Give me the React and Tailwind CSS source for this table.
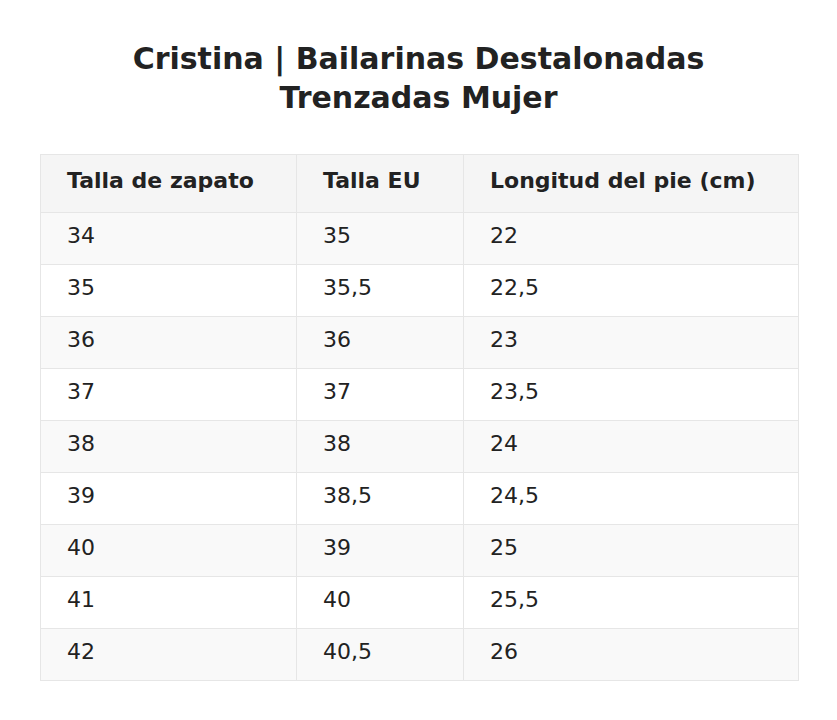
export default function App() {
  const rows = [
    ["34", "35", "22"],
    ["35", "35,5", "22,5"],
    ["36", "36", "23"],
    ["37", "37", "23,5"],
    ["38", "38", "24"],
    ["39", "38,5", "24,5"],
    ["40", "39", "25"],
    ["41", "40", "25,5"],
    ["42", "40,5", "26"],
  ];
  return (
    <div className="bg-white w-[837px] min-h-[720px] px-[40px] pt-[39px] text-[#222]" style={{ fontFamily: '"DejaVu Sans", Verdana, sans-serif' }}>
      <h1 className="text-center font-bold text-[30px] leading-[39px] mb-[37px]">
        Cristina | Bailarinas Destalonadas<br />Trenzadas Mujer
      </h1>
      <table className="w-[759px] border-collapse border border-[#e6e6e6] text-[22px] table-fixed">
        <thead>
          <tr className="bg-[#f5f5f5] h-[58px]">
            <th className="w-[256px] text-left font-bold pl-[26px] pb-[6px] border border-[#e6e6e6]">Talla de zapato</th>
            <th className="w-[167px] text-left font-bold pl-[26px] pb-[6px] border border-[#e6e6e6]">Talla EU</th>
            <th className="text-left font-bold pl-[26px] pb-[6px] border border-[#e6e6e6]">Longitud del pie (cm)</th>
          </tr>
        </thead>
        <tbody>
          {rows.map((r, i) => (
            <tr key={i} className={(i % 2 === 0 ? "bg-[#f9f9f9]" : "bg-white") + " h-[52px]"}>
              {r.map((c, j) => (
                <td key={j} className="pl-[26px] pb-[6px] border border-[#e6e6e6]">{c}</td>
              ))}
            </tr>
          ))}
        </tbody>
      </table>
    </div>
  );
}
